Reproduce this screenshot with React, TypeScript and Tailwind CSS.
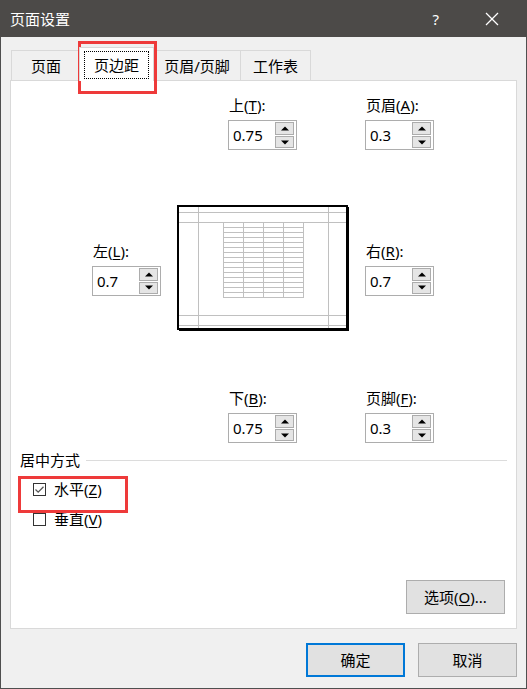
import React from "react";

const FONT = "font-['Noto_Sans','Noto_Sans_CJK_SC',sans-serif]";

function Acc({ pre, k, post = "" }: { pre: string; k: string; post?: string }) {
  return (
    <span>
      {pre}(<span className="underline underline-offset-2">{k}</span>){post}
    </span>
  );
}

function Arrow({ up }: { up: boolean }) {
  return (
    <svg width="8" height="5" viewBox="0 0 8 5">
      {up ? <polygon points="0,4.5 8,4.5 4,0.5" fill="#000" /> : <polygon points="0,0.5 8,0.5 4,4.5" fill="#000" />}
    </svg>
  );
}

function Spin({ value }: { value: string }) {
  return (
    <div className="flex h-[30px] w-[69px] border border-[#adadad] bg-white">
      <div className="flex-1 pl-[4px] text-[15px] leading-[28px] text-black">{value}</div>
      <div className="flex w-[21px] flex-col gap-[1px] py-[1px] pr-[2px]">
        <div className="flex h-[13px] items-center justify-center border border-[#acacac] bg-[#e5e5e5]">
          <Arrow up />
        </div>
        <div className="flex h-[12px] items-center justify-center border border-[#acacac] bg-[#e5e5e5]">
          <Arrow up={false} />
        </div>
      </div>
    </div>
  );
}

function Field({ label, value }: { label: React.ReactNode; value: string }) {
  return (
    <div className="flex w-[69px] flex-col">
      <div className="h-[20px] whitespace-nowrap pl-[1px] text-[15px] leading-[20px]">{label}</div>
      <div className="mt-[5px]">
        <Spin value={value} />
      </div>
    </div>
  );
}

function Preview() {
  const rows: number[] = [];
  for (let y = 17; y <= 92; y += 5) rows.push(y);
  const cols = [46, 66, 86, 106, 126];
  return (
    <div className="h-[126px] w-[172px]">
      <svg width="172" height="126" viewBox="0 0 172 126" shapeRendering="crispEdges">
        <rect x="0" y="0" width="172" height="126" fill="#fff" />
        {[7, 17, 110, 120].map((y) => (
          <line key={"h" + y} x1="2" x2="170" y1={y + 0.5} y2={y + 0.5} stroke="#c0c0c0" strokeWidth="1" />
        ))}
        {[21, 151].map((x) => (
          <line key={"v" + x} x1={x + 0.5} x2={x + 0.5} y1="2" y2="124" stroke="#c0c0c0" strokeWidth="1" />
        ))}
        {rows.map((y) => (
          <line key={"r" + y} x1="46" x2="127" y1={y + 0.5} y2={y + 0.5} stroke="#c0c0c0" strokeWidth="1" />
        ))}
        {cols.map((x) => (
          <line key={"c" + x} x1={x + 0.5} x2={x + 0.5} y1="17" y2="93" stroke="#c0c0c0" strokeWidth="1" />
        ))}
        <rect x="1" y="1" width="169" height="123" fill="none" stroke="#000" strokeWidth="2" />
        <line x1="2" x2="172" y1="125.5" y2="125.5" stroke="#000" strokeWidth="1" />
        <line x1="171.5" x2="171.5" y1="2" y2="126" stroke="#000" strokeWidth="1" />
      </svg>
    </div>
  );
}

function Check({ checked }: { checked: boolean }) {
  return (
    <div className="flex h-[13px] w-[13px] items-center justify-center border border-[#333] bg-white">
      {checked && (
        <svg width="11" height="11" viewBox="0 0 11 11">
          <polyline points="1.5,5.5 4.2,8.2 9.5,2.8" fill="none" stroke="#555" strokeWidth="1.3" />
        </svg>
      )}
    </div>
  );
}

export default function App() {
  return (
    <div className={`relative flex h-[689px] w-[527px] flex-col text-black ${FONT}`}>
      {/* title bar */}
      <div className="flex h-[37px] shrink-0 items-center bg-[#4c4a48] text-white">
        <div className="pl-[10px] text-[15px] leading-[20px]">页面设置</div>
        <div className="ml-auto mr-[46px] text-[15px] leading-[20px]">?</div>
        <div className="mr-[28px] flex h-[14px] w-[14px] items-center justify-center">
          <svg width="14" height="14" viewBox="0 0 14 14">
            <line x1="1" y1="1" x2="13" y2="13" stroke="#fff" strokeWidth="1.2" />
            <line x1="13" y1="1" x2="1" y2="13" stroke="#fff" strokeWidth="1.2" />
          </svg>
        </div>
      </div>

      {/* body */}
      <div className="flex flex-1 flex-col border-x border-b border-[#4f4f4f] bg-[#f0f0f0] px-[9px] pb-[10px]">
        {/* tabs */}
        <div className="flex h-[43px] items-end pl-[1px] text-[15px]">
          <div className="flex h-[30px] w-[68px] items-center justify-center border-l border-t border-[#d9d9d9] pl-[1px] leading-[20px]">
            页面
          </div>
          <div className="relative z-10 -mb-[1px] flex h-[34px] w-[75px] justify-center border-x border-t border-[#d9d9d9] bg-white pt-[3px]">
            <div className="flex h-[28px] w-[65px] items-center justify-center border border-dotted border-black leading-[20px]">
              页边距
            </div>
          </div>
          <div className="flex h-[30px] w-[87px] items-center justify-center border-r border-t border-[#d9d9d9] leading-[20px]">
            页眉/页脚
          </div>
          <div className="flex h-[30px] w-[70px] items-center justify-center border-r border-t border-[#d9d9d9] leading-[20px]">
            工作表
          </div>
        </div>

        {/* panel */}
        <div className="flex h-[549px] flex-col border border-[#d9d9d9] bg-white pt-[14px]">
          <div className="flex gap-[68px] pl-[217px]">
            <Field label={<Acc pre="上" k="T" post=":" />} value="0.75" />
            <Field label={<Acc pre="页眉" k="A" post=":" />} value="0.3" />
          </div>

          <div className="mt-[55px] flex items-center pl-[81px]">
            <Field label={<Acc pre="左" k="L" post=":" />} value="0.7" />
            <div className="ml-[16px]">
              <Preview />
            </div>
            <div className="ml-[16px]">
              <Field label={<Acc pre="右" k="R" post=":" />} value="0.7" />
            </div>
          </div>

          <div className="mt-[57px] flex gap-[68px] pl-[217px]">
            <Field label={<Acc pre="下" k="B" post=":" />} value="0.75" />
            <Field label={<Acc pre="页脚" k="F" post=":" />} value="0.3" />
          </div>

          <div className="mt-[7px] flex items-center pl-[9px] pr-[9px]">
            <div className="text-[15px] leading-[20px]">居中方式</div>
            <div className="ml-[6px] h-px flex-1 bg-[#dcdcdc]" />
          </div>

          <div className="mt-[4px] flex h-[30px] items-center pl-[22px]">
            <Check checked />
            <div className="ml-[8px] text-[15px] leading-[20px]">
              <Acc pre="水平" k="Z" />
            </div>
          </div>
          <div className="flex h-[30px] items-center pl-[22px]">
            <Check checked={false} />
            <div className="ml-[8px] text-[15px] leading-[20px]">
              <Acc pre="垂直" k="V" />
            </div>
          </div>

          <div className="mt-auto flex justify-end pb-[14px] pr-[11px]">
            <div className="flex h-[34px] w-[99px] items-center justify-center border border-[#adadad] bg-[#e1e1e1] text-[15px] leading-[20px]">
              <span>
                选项(<span className="underline underline-offset-2">O</span>)...
              </span>
            </div>
          </div>
        </div>

        {/* bottom buttons */}
        <div className="mt-[14px] flex justify-end gap-[13px]">
          <div className="flex h-[34px] w-[99px] items-center justify-center border-2 border-[#0078d7] bg-[#e1e1e1] text-[15px] leading-[20px]">
            确定
          </div>
          <div className="flex h-[34px] w-[99px] items-center justify-center border border-[#adadad] bg-[#e1e1e1] text-[15px] leading-[20px]">
            取消
          </div>
        </div>
      </div>

      {/* red annotation boxes */}
      <div className="pointer-events-none absolute left-[78px] top-[41px] h-[53px] w-[79px] border-[3px] border-[#ee3a3a]" />
      <div className="pointer-events-none absolute left-[18px] top-[476px] h-[37px] w-[110px] border-[3px] border-[#ee3a3a]" />
    </div>
  );
}
